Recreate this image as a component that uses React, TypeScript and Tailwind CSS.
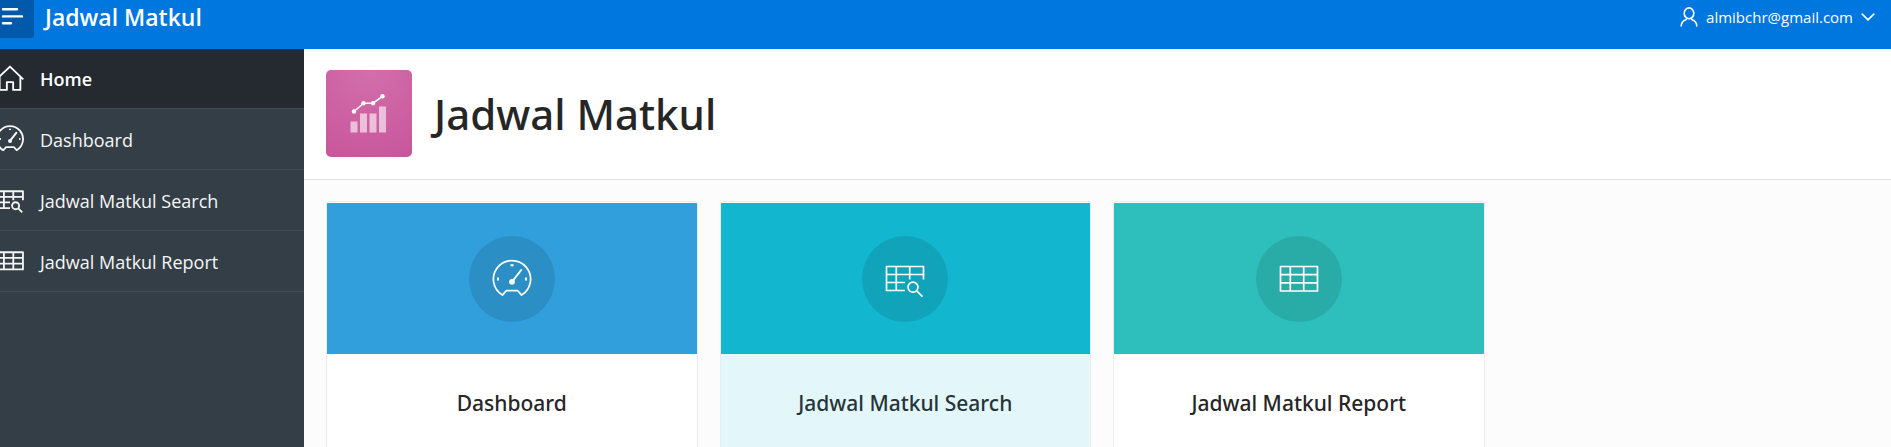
import type { ReactNode } from 'react';

type IconProps = { className?: string; weight?: number };

function IconBase({ className, weight = 1.7, children }: IconProps & { children: ReactNode }) {
  return (
    <svg
      viewBox="0 0 40 40"
      className={className}
      fill="none"
      stroke="currentColor"
      strokeWidth={weight}
      strokeLinejoin="round"
      aria-hidden="true"
    >
      {children}
    </svg>
  );
}

function HomeIcon(props: IconProps) {
  return (
    <IconBase {...props}>
      <path d="M0.8 20.5 20 2.2 39 20.5M5.2 17v18.6h10.3V24.5h9v11.1h10.3V17" />
    </IconBase>
  );
}

function GaugeIcon(props: IconProps) {
  return (
    <IconBase {...props}>
      <path d="M10.4 36.1A18.6 18.6 0 1 1 29.6 36.1L26.6 32.6Q26 31.7 25 31.7H15Q14 31.7 13.4 32.6Z" />
      <path d="M20 22.8 29.2 11" strokeWidth={props.weight ? props.weight + 0.3 : 1.9} strokeLinecap="round" />
      <circle cx="20" cy="22.8" r="2.9" fill="currentColor" stroke="none" />
      <path d="M18.5 6.2h3M6 18.5v3M34 18.5v3" strokeWidth="2" />
    </IconBase>
  );
}

function TableIcon(props: IconProps) {
  return (
    <IconBase {...props}>
      <path d="M1.5 7.5h37v24.5h-37ZM1.5 15.6h37M1.5 23.8h37M11.3 7.5v24.5M24.7 7.5v24.5" />
    </IconBase>
  );
}

function TableSearchIcon(props: IconProps) {
  return (
    <IconBase {...props}>
      <path d="M20 31.5H1.5v-24h37v13M1.5 15.5h37M1.5 23.5H20M11.3 7.5v24M24.7 7.5v13" />
      <circle cx="28" cy="28.2" r="5" />
      <path d="m31.7 31.9 5.8 5.8" />
    </IconBase>
  );
}

function ChartIcon() {
  return (
    <svg viewBox="0 0 40 44" className="h-11 w-10" fill="#fff" aria-hidden="true">
      <path d="M1.5 29.5h7v11h-7ZM11 21.5h7v19h-7ZM20.5 21.5h7v19h-7ZM30 14.5h7v26h-7Z" fillOpacity="0.6" />
      <path d="M5 19.5 14.5 11.2H24L33.5 4.3" fill="none" stroke="#fff" strokeWidth="1.6" />
      <circle cx="5" cy="19.5" r="2.2" />
      <circle cx="14.5" cy="11.2" r="2.2" />
      <circle cx="24" cy="11.2" r="2.2" />
      <circle cx="33.5" cy="4.3" r="2.2" />
    </svg>
  );
}

const navItems = [
  { label: 'Home', Icon: HomeIcon, active: true },
  { label: 'Dashboard', Icon: GaugeIcon, active: false },
  { label: 'Jadwal Matkul Search', Icon: TableSearchIcon, active: false },
  { label: 'Jadwal Matkul Report', Icon: TableIcon, active: false },
];

const cards = [
  { label: 'Dashboard', Icon: GaugeIcon, banner: 'bg-[#309fdb]', body: 'bg-white text-[#262626]' },
  { label: 'Jadwal Matkul Search', Icon: TableSearchIcon, banner: 'bg-[#13b6cf]', body: 'bg-[#e3f6fa] text-[#263539]' },
  { label: 'Jadwal Matkul Report', Icon: TableIcon, banner: 'bg-[#2ebfbc]', body: 'bg-white text-[#262626]' },
];

export default function App() {
  return (
    <div className="flex h-screen flex-col overflow-hidden bg-[#fcfcfc] font-['Segoe_UI','Open_Sans',sans-serif] text-[#262626]">
      <header className="flex h-[49px] shrink-0 items-start justify-between bg-[#0076df] text-white">
        <div className="flex items-start">
          <button type="button" aria-label="Toggle navigation" className="h-[38px] w-[34px] rounded-br-[3px] bg-[#0059ab]">
            <svg viewBox="0 0 34 38" className="h-[38px] w-[34px]" stroke="#fff" strokeWidth="2.4" strokeLinecap="round" aria-hidden="true">
              <path d="M3 9.3h14M3 16.4h19M3 23.2h8" />
            </svg>
          </button>
          <a href="#home" className="ml-[11px] text-[23px] leading-[34px] font-semibold">Jadwal Matkul</a>
        </div>
        <button type="button" className="mr-4 flex h-[34px] items-center gap-2 text-[15px]">
          <svg viewBox="0 0 18 20" className="h-5 w-[18px]" fill="none" stroke="currentColor" strokeWidth="1.6" strokeLinecap="round" aria-hidden="true">
            <ellipse cx="9" cy="6.3" rx="4.8" ry="5.4" />
            <path d="M1.2 19c0-3.8 1.8-5.2 5-6.5M16.8 19c0-3.8-1.8-5.2-5-6.5" />
          </svg>
          <span>almibchr@gmail.com</span>
          <svg viewBox="0 0 14 8" className="h-2 w-3.5" fill="none" stroke="currentColor" strokeWidth="1.7" strokeLinecap="round" aria-hidden="true">
            <path d="m1.2 1.2 5.8 5.6 5.8-5.6" />
          </svg>
        </button>
      </header>

      <div className="flex min-h-0 flex-1">
        <nav className="w-[304px] shrink-0 overflow-hidden bg-[#343e46] text-white">
          <ul>
            {navItems.map(({ label, Icon, active }) => (
              <li key={label}>
                <a
                  href="#nav"
                  className={
                    active
                      ? 'flex h-[60px] items-center gap-4 border-b border-[#434d56] bg-[#242a2f] text-[18px] font-semibold'
                      : 'flex h-[61px] items-center gap-4 border-b border-[#434d56] text-[18px] text-[#f5f6f6]'
                  }
                >
                  <Icon className="-ml-1 size-7 shrink-0" weight={2.6} />
                  <span className="pt-0.5">{label}</span>
                </a>
              </li>
            ))}
          </ul>
        </nav>

        <main className="min-w-0 flex-1">
          <div className="flex items-center gap-[22px] border-b border-[#e2e2e2] bg-white px-[22px] pt-[21px] pb-[22px]">
            <div className="flex h-[87px] w-[86px] shrink-0 items-center justify-center rounded-[5px] bg-[radial-gradient(circle_at_top,#d26fab,#c8559b)]">
              <ChartIcon />
            </div>
            <h1 className="font-['Segoe_UI','Noto_Sans',sans-serif] text-[42px] leading-[87px] font-medium">Jadwal Matkul</h1>
          </div>

          <ul className="grid grid-cols-4 gap-[22px] pt-[21px] pr-[13px] pl-[22px]">
            {cards.map(({ label, Icon, banner, body }) => (
              <li key={label}>
                <a href="#card" className="block overflow-hidden rounded-[3px] border border-[#ebebeb] bg-white pt-px">
                  <div className={`flex h-[151px] items-center justify-center ${banner}`}>
                    <span className="flex size-[86px] items-center justify-center rounded-full bg-black/10 text-white">
                      <Icon className="size-10" />
                    </span>
                  </div>
                  <h2 className={`h-[110px] text-center font-['Segoe_UI','Noto_Sans',sans-serif] text-[21px] leading-[98px] font-medium ${body}`}>{label}</h2>
                </a>
              </li>
            ))}
          </ul>
        </main>
      </div>
    </div>
  );
}
